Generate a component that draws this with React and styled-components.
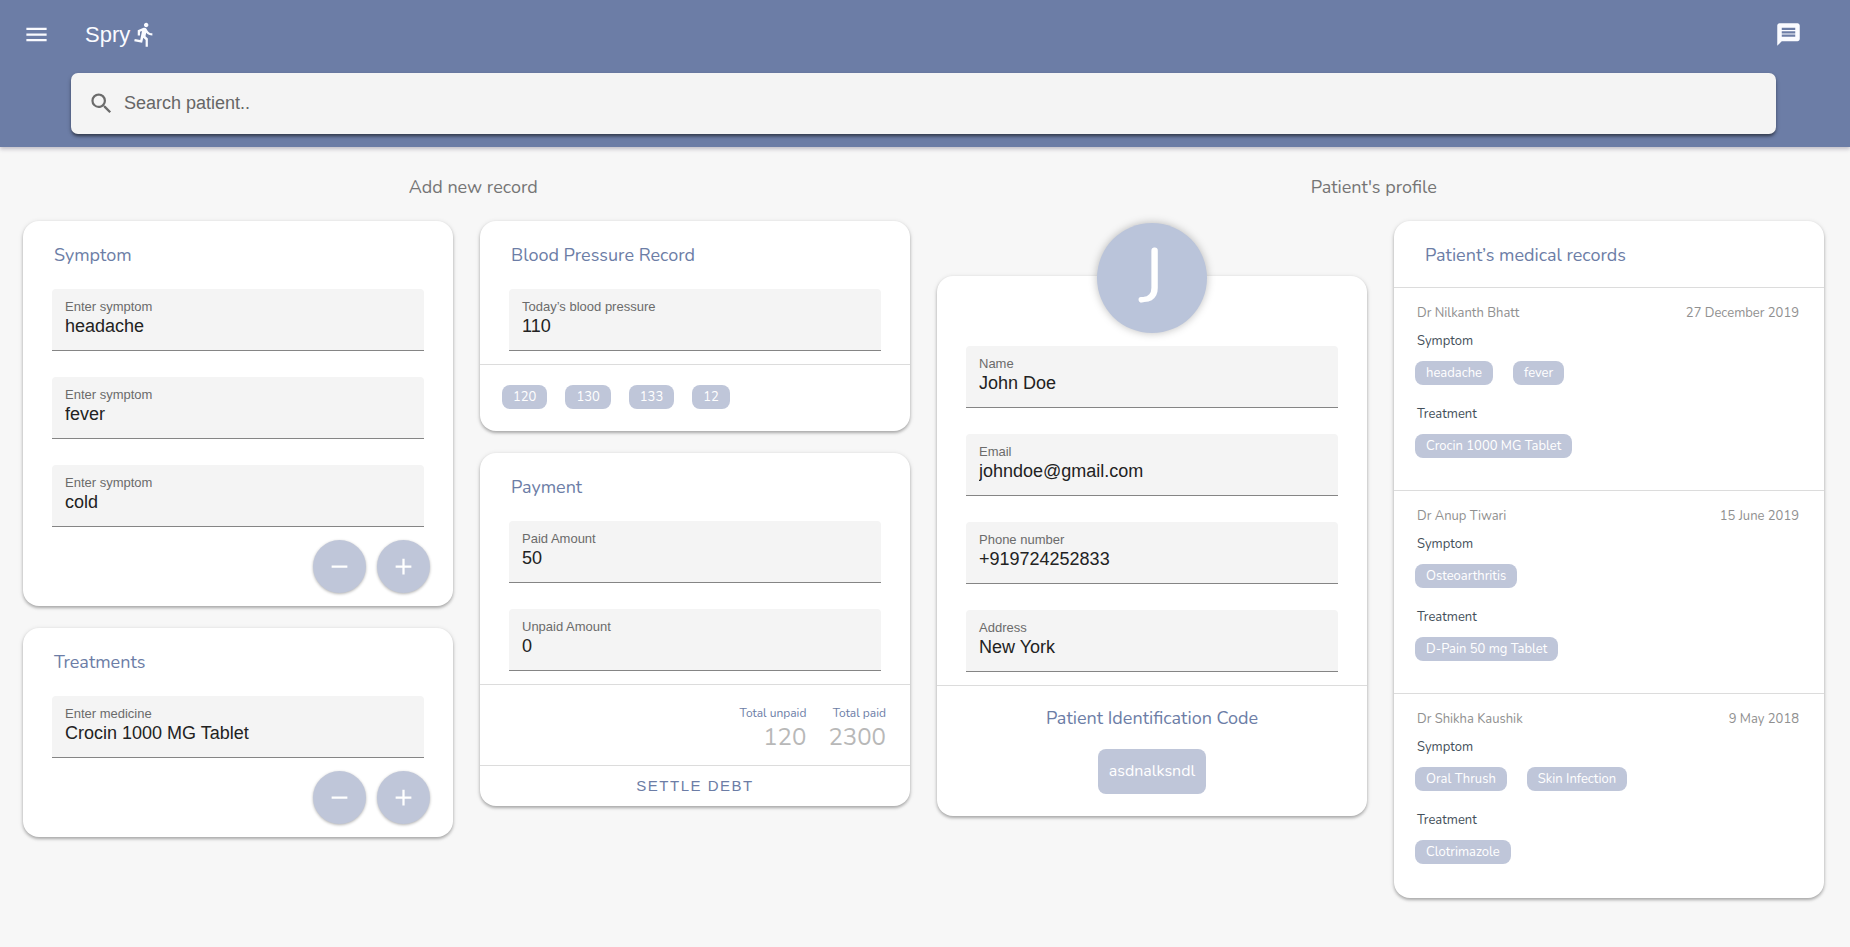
import React, { useId, useState } from 'react';
import styled, { createGlobalStyle, ThemeProvider } from 'styled-components';
import {
  MdAdd,
  MdDirectionsRun,
  MdMenu,
  MdMessage,
  MdRemove,
  MdSearch,
} from 'react-icons/md';

const theme = {
  primary: '#6c7da6',
  soft: '#bfc6d9',
  page: '#f7f7f7',
  field: '#f4f4f4',
  line: '#dcdcdc',
  ui: '"Liberation Sans", Arial, sans-serif',
  display: 'Nunito, Lato, sans-serif',
};

const GlobalStyle = createGlobalStyle`
  *, *::before, *::after { box-sizing: border-box; }
  body {
    margin: 0;
    background: ${theme.page};
    font-family: ${theme.display};
  }
  h1, h2, h3, h4, p, ul, dl, dd { margin: 0; padding: 0; font-weight: 400; }
  ul { list-style: none; }
  button { border: 0; padding: 0; background: none; cursor: pointer; }
`;

const Header = styled.header`
  padding-bottom: 13px;
  background: ${({ theme }) => theme.primary};
  box-shadow: 0 2px 4px rgba(60, 50, 80, 0.3);
`;

const TopBar = styled.div`
  display: flex;
  align-items: center;
  padding: 21px 48px 25px 23px;
`;

const IconButton = styled.button`
  display: flex;
  color: #fafbff;
  font-size: 27px;
`;

const Brand = styled.h1`
  display: flex;
  align-items: center;
  gap: 1px;
  margin-left: 35px;
  margin-right: auto;
  color: #fafbff;
  font-family: ${({ theme }) => theme.ui};
  font-size: 22px;
  line-height: 27px;

  svg { font-size: 27px; }
`;

const SearchBar = styled.label`
  display: flex;
  align-items: center;
  gap: 9px;
  height: 61px;
  margin: 0 74px 0 71px;
  padding: 0 17px;
  border-radius: 7px;
  background: ${({ theme }) => theme.field};
  box-shadow: 0 3px 3px -1px rgba(0, 0, 0, 0.35), 0 2px 4px rgba(0, 0, 0, 0.3);
  color: #6b6b6b;
  font-size: 27px;

  svg { flex: none; }
`;

const SearchInput = styled.input`
  flex: 1;
  min-width: 0;
  padding: 0 0 2px;
  border: 0;
  outline: 0;
  background: none;
  font: 18px/24px ${({ theme }) => theme.ui};

  &::placeholder { color: #666; opacity: 1; }
`;

const Main = styled.main`
  padding: 0 26px 40px 23px;
`;

const Headings = styled.div`
  display: grid;
  grid-template-columns: 1fr 1fr;
  padding: 28px 0 22px;
`;

const Heading = styled.h2`
  color: #757575;
  font-size: 18px;
  line-height: 24px;
  text-align: center;
`;

const Columns = styled.div`
  display: grid;
  grid-template-columns: repeat(4, minmax(0, 1fr));
  gap: 27px;
  align-items: start;
`;

const Column = styled.div`
  display: flex;
  flex-direction: column;
  gap: 22px;
`;

const Card = styled.section`
  overflow: hidden;
  border-radius: 16px;
  background: #fff;
  box-shadow: 0 2px 3px rgba(0, 0, 0, 0.24), 0 1px 5px rgba(0, 0, 0, 0.14);
`;

const ProfileCard = styled(Card)`
  position: relative;
  overflow: visible;
  margin-top: 55px;
  padding-top: 68px;
`;

const Avatar = styled.div`
  position: absolute;
  top: -53px;
  left: 50%;
  display: flex;
  align-items: center;
  justify-content: center;
  width: 110px;
  height: 110px;
  margin-left: -55px;
  padding-bottom: 3px;
  border-radius: 50%;
  background: #bac4da;
  box-shadow: 0 0 8px rgba(0, 0, 0, 0.26);
  color: #fff;
  font-size: 77px;
  line-height: 100px;
`;

const CardTitle = styled.h3`
  padding: 22px 31px 20px;
  color: ${({ theme }) => theme.primary};
  font-size: 18px;
  line-height: 24px;
`;

const Fields = styled.div`
  display: grid;
  gap: 26px;
  padding: 2px 29px 13px;
`;

const FieldBox = styled.div`
  display: flex;
  flex-direction: column;
  padding: 10px 13px 13px;
  border-bottom: 1px solid #858585;
  border-radius: 4px 4px 0 0;
  background: ${({ theme }) => theme.field};
  font-family: ${({ theme }) => theme.ui};
`;

const FieldLabel = styled.label`
  color: #6b6b6b;
  font-size: 13px;
  line-height: 16px;
`;

const FieldInput = styled.input`
  width: 100%;
  height: 22px;
  padding: 0;
  border: 0;
  outline: 0;
  background: none;
  color: #222;
  font: 18px/22px ${({ theme }) => theme.ui};
`;

const Actions = styled.div`
  display: flex;
  justify-content: flex-end;
  gap: 11px;
  padding: 0 23px 13px;
`;

const RoundButton = styled.button`
  display: flex;
  align-items: center;
  justify-content: center;
  width: 53px;
  height: 53px;
  border-radius: 50%;
  background: ${({ theme }) => theme.soft};
  box-shadow: 0 1px 3px rgba(0, 0, 0, 0.3);
  color: #fff;
  font-size: 27px;
`;

const Footer = styled.div`
  border-top: 1px solid ${({ theme }) => theme.line};
`;

const ChipFooter = styled(Footer)`
  padding: 20px 22px 22px;
`;

const ChipList = styled.ul`
  display: flex;
  flex-wrap: wrap;
  gap: ${({ $gap }) => $gap}px;
`;

const Chip = styled.li`
  height: 24px;
  padding: 0 11px;
  border-radius: 8px;
  background: ${({ theme }) => theme.soft};
  color: #fff;
  font-size: 13px;
  line-height: 24px;
`;

const Totals = styled.dl`
  display: flex;
  justify-content: flex-end;
  gap: 22px;
  padding: 20px 24px 14px;
  border-top: 1px solid ${({ theme }) => theme.line};
  text-align: right;
`;

const TotalLabel = styled.dt`
  color: ${({ theme }) => theme.primary};
  font-size: 12px;
  line-height: 16px;
`;

const TotalValue = styled.dd`
  padding-top: 2px;
  color: #b8b8b8;
  font-size: 24px;
  line-height: 28px;
`;

const SettleButton = styled.button`
  display: block;
  width: 100%;
  height: 40px;
  color: ${({ theme }) => theme.primary};
  font: 15px/40px ${({ theme }) => theme.ui};
  letter-spacing: 0.1em;
  text-transform: uppercase;
`;

const CodeFooter = styled(Footer)`
  display: flex;
  flex-direction: column;
  align-items: center;
  gap: 19px;
  padding: 20px 0 22px;
`;

const CodeTitle = styled(CardTitle)`
  padding: 0;
`;

const Code = styled.p`
  padding: 0 11px;
  border-radius: 8px;
  background: ${({ theme }) => theme.soft};
  color: #fff;
  font-size: 16px;
  line-height: 45px;
`;

const RecordItem = styled.article`
  padding: 15px 25px 32px 21px;
  border-top: 1px solid ${({ theme }) => theme.line};

  &:last-child { padding-bottom: 34px; }
`;

const RecordHead = styled.div`
  display: flex;
  justify-content: space-between;
  padding-left: 2px;
  color: #909090;
  font-size: 13px;
  line-height: 20px;
`;

const RecordLabel = styled.h4`
  padding: ${({ $first }) => ($first ? 8 : 19)}px 2px 10px;
  color: #444f5a;
  font-size: 13px;
  line-height: 20px;
`;

function Field({ label, value }) {
  const id = useId();
  return (
    <FieldBox>
      <FieldLabel htmlFor={id}>{label}</FieldLabel>
      <FieldInput id={id} type="text" defaultValue={value} />
    </FieldBox>
  );
}

function Chips({ items, gap }) {
  return (
    <ChipList $gap={gap}>
      {items.map((item) => (
        <Chip key={item}>{item}</Chip>
      ))}
    </ChipList>
  );
}

function EntryCard({ title, label, initial }) {
  const [entries, setEntries] = useState(initial);
  return (
    <Card>
      <CardTitle>{title}</CardTitle>
      <Fields>
        {entries.map((entry, index) => (
          <Field key={index} label={label} value={entry} />
        ))}
      </Fields>
      <Actions>
        <RoundButton
          type="button"
          aria-label="Remove entry"
          onClick={() => setEntries(entries.slice(0, -1))}
        >
          <MdRemove />
        </RoundButton>
        <RoundButton
          type="button"
          aria-label="Add entry"
          onClick={() => setEntries([...entries, ''])}
        >
          <MdAdd />
        </RoundButton>
      </Actions>
    </Card>
  );
}

function MedicalRecord({ doctor, date, symptoms, treatments }) {
  return (
    <RecordItem>
      <RecordHead>
        <span>{doctor}</span>
        <time>{date}</time>
      </RecordHead>
      <RecordLabel $first>Symptom</RecordLabel>
      <Chips items={symptoms} gap={20} />
      <RecordLabel>Treatment</RecordLabel>
      <Chips items={treatments} gap={20} />
    </RecordItem>
  );
}

const records = [
  {
    doctor: 'Dr Nilkanth Bhatt',
    date: '27 December 2019',
    symptoms: ['headache', 'fever'],
    treatments: ['Crocin 1000 MG Tablet'],
  },
  {
    doctor: 'Dr Anup Tiwari',
    date: '15 June 2019',
    symptoms: ['Osteoarthritis'],
    treatments: ['D-Pain 50 mg Tablet'],
  },
  {
    doctor: 'Dr Shikha Kaushik',
    date: '9 May 2018',
    symptoms: ['Oral Thrush', 'Skin Infection'],
    treatments: ['Clotrimazole'],
  },
];

export default function App() {
  return (
    <ThemeProvider theme={theme}>
      <GlobalStyle />
      <Header>
        <TopBar>
          <IconButton type="button" aria-label="Menu">
            <MdMenu />
          </IconButton>
          <Brand>
            Spry
            <MdDirectionsRun />
          </Brand>
          <IconButton type="button" aria-label="Messages">
            <MdMessage />
          </IconButton>
        </TopBar>
        <SearchBar>
          <MdSearch />
          <SearchInput
            type="text"
            aria-label="Search patient"
            placeholder="Search patient.."
          />
        </SearchBar>
      </Header>
      <Main>
        <Headings>
          <Heading>Add new record</Heading>
          <Heading>Patient's profile</Heading>
        </Headings>
        <Columns>
          <Column>
            <EntryCard
              title="Symptom"
              label="Enter symptom"
              initial={['headache', 'fever', 'cold']}
            />
            <EntryCard
              title="Treatments"
              label="Enter medicine"
              initial={['Crocin 1000 MG Tablet']}
            />
          </Column>
          <Column>
            <Card>
              <CardTitle>Blood Pressure Record</CardTitle>
              <Fields>
                <Field label="Today’s blood pressure" value="110" />
              </Fields>
              <ChipFooter>
                <Chips items={['120', '130', '133', '12']} gap={18} />
              </ChipFooter>
            </Card>
            <Card>
              <CardTitle>Payment</CardTitle>
              <Fields>
                <Field label="Paid Amount" value="50" />
                <Field label="Unpaid Amount" value="0" />
              </Fields>
              <Totals>
                <div>
                  <TotalLabel>Total unpaid</TotalLabel>
                  <TotalValue>120</TotalValue>
                </div>
                <div>
                  <TotalLabel>Total paid</TotalLabel>
                  <TotalValue>2300</TotalValue>
                </div>
              </Totals>
              <Footer>
                <SettleButton type="button">Settle debt</SettleButton>
              </Footer>
            </Card>
          </Column>
          <Column>
            <ProfileCard>
              <Avatar>J</Avatar>
              <Fields>
                <Field label="Name" value="John Doe" />
                <Field label="Email" value="johndoe@gmail.com" />
                <Field label="Phone number" value="+919724252833" />
                <Field label="Address" value="New York" />
              </Fields>
              <CodeFooter>
                <CodeTitle>Patient Identification Code</CodeTitle>
                <Code>asdnalksndl</Code>
              </CodeFooter>
            </ProfileCard>
          </Column>
          <Column>
            <Card>
              <CardTitle>Patient’s medical records</CardTitle>
              {records.map((record) => (
                <MedicalRecord key={record.doctor} {...record} />
              ))}
            </Card>
          </Column>
        </Columns>
      </Main>
    </ThemeProvider>
  );
}
